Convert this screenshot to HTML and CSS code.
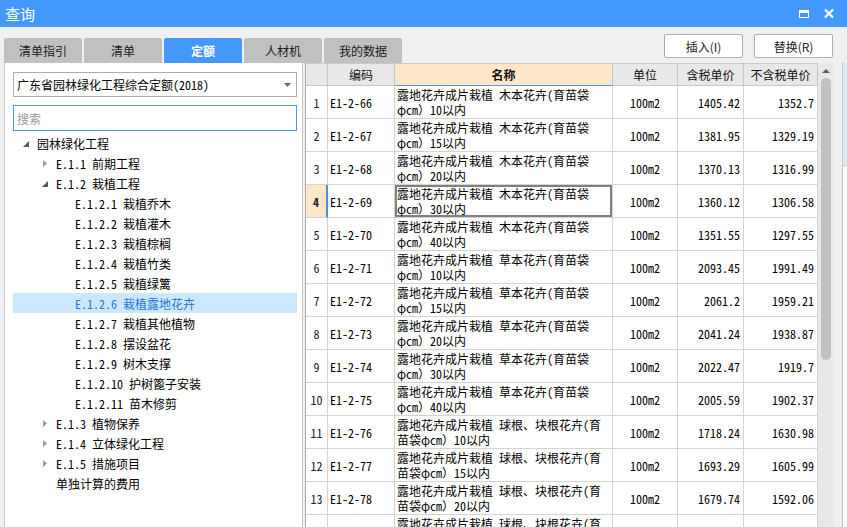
FILE: index.html
```html
<!DOCTYPE html>
<html lang="zh">
<head>
<meta charset="utf-8">
<title>查询</title>
<link rel="stylesheet" href="styles.css">
</head>
<body>
<div class="titlebar">
  <span class="title">查询</span>
  <div class="ctrls">
    <span class="max"></span>
    <svg class="close" width="10" height="9" viewBox="0 0 10 9"><path d="M1 0.5 L9 8.5 M9 0.5 L1 8.5" stroke="#fff" stroke-width="2.2" fill="none"/></svg>
  </div>
</div>
<div class="toolbar">
  <div class="tabs">
    <div class="tab">清单指引</div>
    <div class="tab">清单</div>
    <div class="tab active">定额</div>
    <div class="tab">人材机</div>
    <div class="tab">我的数据</div>
  </div>
  <div class="actions">
    <button class="btn">插入(I)</button>
    <button class="btn">替换(R)</button>
  </div>
</div>
<div class="content">
  <div class="left">
    <div class="select song">广东省园林绿化工程综合定额(2018)<svg class="caret" width="7" height="4" viewBox="0 0 7 4"><path d="M0 0 H7 L3.5 4 Z" fill="#6a6a6a"/></svg></div>
    <div class="search">搜索</div>
    <div class="tree song">
      <div class="node l0"><span class="tg open"><svg width="6" height="6" viewBox="0 0 6 6"><path d="M6 0 V6 H0 Z" fill="#595959"/></svg></span>园林绿化工程</div>
      <div class="node l1"><span class="tg"><svg width="4" height="7" viewBox="0 0 4 7"><path d="M0 0 L4 3.5 L0 7 Z" fill="#9b9b9b"/></svg></span>E.1.1 前期工程</div>
      <div class="node l1"><span class="tg open"><svg width="6" height="6" viewBox="0 0 6 6"><path d="M6 0 V6 H0 Z" fill="#595959"/></svg></span>E.1.2 栽植工程</div>
      <div class="node l2"><span class="tg"></span>E.1.2.1 栽植乔木</div>
      <div class="node l2"><span class="tg"></span>E.1.2.2 栽植灌木</div>
      <div class="node l2"><span class="tg"></span>E.1.2.3 栽植棕榈</div>
      <div class="node l2"><span class="tg"></span>E.1.2.4 栽植竹类</div>
      <div class="node l2"><span class="tg"></span>E.1.2.5 栽植绿篱</div>
      <div class="node l2 sel"><span class="tg"></span>E.1.2.6 栽植露地花卉</div>
      <div class="node l2"><span class="tg"></span>E.1.2.7 栽植其他植物</div>
      <div class="node l2"><span class="tg"></span>E.1.2.8 摆设盆花</div>
      <div class="node l2"><span class="tg"></span>E.1.2.9 树木支撑</div>
      <div class="node l2"><span class="tg"></span>E.1.2.10 护树篦子安装</div>
      <div class="node l2"><span class="tg"></span>E.1.2.11 苗木修剪</div>
      <div class="node l1"><span class="tg"><svg width="4" height="7" viewBox="0 0 4 7"><path d="M0 0 L4 3.5 L0 7 Z" fill="#9b9b9b"/></svg></span>E.1.3 植物保养</div>
      <div class="node l1"><span class="tg"><svg width="4" height="7" viewBox="0 0 4 7"><path d="M0 0 L4 3.5 L0 7 Z" fill="#9b9b9b"/></svg></span>E.1.4 立体绿化工程</div>
      <div class="node l1"><span class="tg"><svg width="4" height="7" viewBox="0 0 4 7"><path d="M0 0 L4 3.5 L0 7 Z" fill="#9b9b9b"/></svg></span>E.1.5 措施项目</div>
      <div class="node l1"><span class="tg"></span>单独计算的费用</div>
    </div>
  </div>

  <div class="grid song">
    <div class="cell hd"></div>
    <div class="cell hd">编码</div>
    <div class="cell hd hname">名称</div>
    <div class="cell hd">单位</div>
    <div class="cell hd">含税单价</div>
    <div class="cell hd">不含税单价</div>

    <div class="cell rn">1</div><div class="cell code">E1-2-66</div><div class="cell name">露地花卉成片栽植 木本花卉(育苗袋φcm）10以内</div><div class="cell unit">100m2</div><div class="cell num">1405.42</div><div class="cell num">1352.7</div>
    <div class="cell rn">2</div><div class="cell code">E1-2-67</div><div class="cell name">露地花卉成片栽植 木本花卉(育苗袋φcm）15以内</div><div class="cell unit">100m2</div><div class="cell num">1381.95</div><div class="cell num">1329.19</div>
    <div class="cell rn">3</div><div class="cell code">E1-2-68</div><div class="cell name">露地花卉成片栽植 木本花卉(育苗袋φcm）20以内</div><div class="cell unit">100m2</div><div class="cell num">1370.13</div><div class="cell num">1316.99</div>
    <div class="cell rn cur">4</div><div class="cell code">E1-2-69</div><div class="cell name focus">露地花卉成片栽植 木本花卉(育苗袋φcm）30以内</div><div class="cell unit">100m2</div><div class="cell num">1360.12</div><div class="cell num">1306.58</div>
    <div class="cell rn">5</div><div class="cell code">E1-2-70</div><div class="cell name">露地花卉成片栽植 木本花卉(育苗袋φcm）40以内</div><div class="cell unit">100m2</div><div class="cell num">1351.55</div><div class="cell num">1297.55</div>
    <div class="cell rn">6</div><div class="cell code">E1-2-71</div><div class="cell name">露地花卉成片栽植 草本花卉(育苗袋φcm）10以内</div><div class="cell unit">100m2</div><div class="cell num">2093.45</div><div class="cell num">1991.49</div>
    <div class="cell rn">7</div><div class="cell code">E1-2-72</div><div class="cell name">露地花卉成片栽植 草本花卉(育苗袋φcm）15以内</div><div class="cell unit">100m2</div><div class="cell num">2061.2</div><div class="cell num">1959.21</div>
    <div class="cell rn">8</div><div class="cell code">E1-2-73</div><div class="cell name">露地花卉成片栽植 草本花卉(育苗袋φcm）20以内</div><div class="cell unit">100m2</div><div class="cell num">2041.24</div><div class="cell num">1938.87</div>
    <div class="cell rn">9</div><div class="cell code">E1-2-74</div><div class="cell name">露地花卉成片栽植 草本花卉(育苗袋φcm）30以内</div><div class="cell unit">100m2</div><div class="cell num">2022.47</div><div class="cell num">1919.7</div>
    <div class="cell rn">10</div><div class="cell code">E1-2-75</div><div class="cell name">露地花卉成片栽植 草本花卉(育苗袋φcm）40以内</div><div class="cell unit">100m2</div><div class="cell num">2005.59</div><div class="cell num">1902.37</div>
    <div class="cell rn">11</div><div class="cell code">E1-2-76</div><div class="cell name">露地花卉成片栽植 球根、块根花卉(育苗袋φcm）10以内</div><div class="cell unit">100m2</div><div class="cell num">1718.24</div><div class="cell num">1630.98</div>
    <div class="cell rn">12</div><div class="cell code">E1-2-77</div><div class="cell name">露地花卉成片栽植 球根、块根花卉(育苗袋φcm）15以内</div><div class="cell unit">100m2</div><div class="cell num">1693.29</div><div class="cell num">1605.99</div>
    <div class="cell rn">13</div><div class="cell code">E1-2-78</div><div class="cell name">露地花卉成片栽植 球根、块根花卉(育苗袋φcm）20以内</div><div class="cell unit">100m2</div><div class="cell num">1679.74</div><div class="cell num">1592.06</div>
    <div class="cell rn"></div><div class="cell code"></div><div class="cell name">露地花卉成片栽植 球根、块根花卉(育苗袋φcm）30以内</div><div class="cell unit"></div><div class="cell num"></div><div class="cell num"></div>
  </div>

  <div class="vscroll">
    <div class="arrow"><svg width="8" height="4" viewBox="0 0 8 4"><path d="M0 4 L4 0 L8 4 Z" fill="#606060"/></svg></div>
    <div class="thumb"></div>
  </div>
  <div class="gutter"></div>
  <div class="outside"></div>
</div>
</body>
</html>
```

FILE: styles.css
```css
html, body {
  margin: 0;
  padding: 0;
}
body {
  width: 847px;
  height: 527px;
  overflow: hidden;
  background: #f0f0f0;
  font-family: "Noto Sans CJK SC", sans-serif;
  font-size: 12px;
  color: #000;
}

.song {
  font-family: "Noto Sans Mono CJK SC", "DejaVu Sans Mono", "Noto Sans CJK SC", monospace;
  font-size: 12px;
}

/* title bar */
.titlebar {
  height: 27px;
  background: #4499ff;
  display: flex;
  align-items: center;
  color: #fff;
}
.title {
  font-size: 15px;
  margin-left: 5px;
  line-height: 27px;
}
.ctrls {
  margin-left: auto;
  margin-right: 13px;
  display: flex;
  align-items: center;
  gap: 15px;
}
.max {
  display: block;
  width: 10px;
  height: 8px;
  box-sizing: border-box;
  border: 1.5px solid #fff;
  border-top-width: 3px;
}
.close {
  display: block;
}

/* toolbar with tabs */
.toolbar {
  height: 36px;
  display: flex;
  align-items: flex-end;
  padding-left: 4px;
}
.tabs {
  display: flex;
  gap: 2px;
}
.tab {
  width: 78px;
  height: 25px;
  background: #c0c0c0;
  border-radius: 2px 2px 0 0;
  display: flex;
  align-items: center;
  justify-content: center;
  color: #1a1a1a;
  font-size: 12px;
}
.tab.active {
  background: #4499ff;
  color: #fff;
  font-weight: bold;
}
.actions {
  margin-left: auto;
  margin-right: 14px;
  align-self: flex-start;
  margin-top: 7px;
  display: flex;
  gap: 11px;
}
.btn {
  width: 79px;
  height: 24px;
  border: 1px solid #adadad;
  border-radius: 2px;
  background: #fff;
  font-family: "Noto Sans CJK SC", sans-serif;
  font-size: 12px;
  color: #222;
  padding: 0;
}

/* content */
.content {
  display: flex;
  height: 464px;
}
.left {
  margin-left: 4px;
  width: 299px;
  box-sizing: border-box;
  background: #fff;
  border-left: 1px solid #c8c8c8;
  border-right: 1px solid #c8c8c8;
  padding: 9px 5px 0 8px;
}
.select {
  height: 25px;
  box-sizing: border-box;
  border: 1px solid #acacac;
  display: flex;
  align-items: center;
  padding-left: 3px;
  padding-right: 5px;
  color: #000;
}
.caret {
  margin-left: auto;
}
.search {
  margin-top: 8px;
  height: 26px;
  box-sizing: border-box;
  border: 1px solid #4499ff;
  display: flex;
  align-items: center;
  padding-left: 3px;
  color: #9a9a9a;
}
.tree {
  margin-top: 2px;
}
.node {
  height: 20px;
  display: flex;
  align-items: center;
  white-space: pre;
}
.node.l0 { padding-left: 6px; }
.node.l1 { padding-left: 25px; }
.node.l2 { padding-left: 44px; }
.node.sel {
  background: #cce8ff;
  color: #1f74d8;
}
.tg {
  width: 14px;
  height: 20px;
  margin-right: 4px;
  display: flex;
  align-items: center;
  justify-content: center;
}
.tg.open svg {
  margin-top: 2px;
}

/* grid */
.grid {
  margin-left: 2px;
  width: 513px;
  box-sizing: border-box;
  border-left: 1px solid #a9a9a9;
  border-top: 1px solid #c8c8c8;
  background: #fff;
  display: grid;
  grid-template-columns: 22px 67px 218px 65px 66px 74px;
  grid-template-rows: 22px;
  grid-auto-rows: 33px;
  align-content: start;
  overflow: hidden;
}
.cell {
  box-sizing: border-box;
  border-right: 1px solid #d4d4d4;
  border-bottom: 1px solid #d4d4d4;
  display: flex;
  align-items: center;
  overflow: hidden;
  white-space: nowrap;
}
.hd {
  background: #e8e8e8;
  border-color: #c6c6c6;
  justify-content: center;
  font-family: "Noto Sans CJK SC", sans-serif;
  font-size: 12px;
  color: #111;
}
.hd.hname {
  background: #fee7c8;
  border-bottom-color: #5b9bd5;
  font-weight: bold;
}
.rn {
  justify-content: center;
  color: #222;
}
.rn.cur {
  background: #fde6c7;
  border-right: 2px solid #4a90e2;
  font-weight: bold;
}
.code {
  padding-left: 2px;
}
.name {
  display: block;
  white-space: normal;
  line-height: 15px;
  padding: 1px 4px 0 2px;
}
.name.focus {
  box-shadow: inset 0 0 0 2px #7f7f7f;
}
.unit {
  justify-content: center;
}
.num {
  justify-content: flex-end;
  padding-right: 3px;
}

/* scrollbar */
.vscroll {
  width: 15px;
  background: #e8e8e8;
  display: flex;
  flex-direction: column;
  align-items: center;
}
.arrow {
  height: 15px;
  display: flex;
  align-items: center;
  justify-content: center;
}
.thumb {
  width: 10px;
  height: 282px;
  background: #c1c1c1;
  border-radius: 5px;
}
.gutter {
  width: 9px;
  background: #f0f0f0;
}
.outside {
  flex: 1;
  border-left: 1px solid #c3c3c3;
  background: linear-gradient(#dfe9f6 0 102px, #c8c8c8 102px 103px, #fafafa 103px);
}
```
